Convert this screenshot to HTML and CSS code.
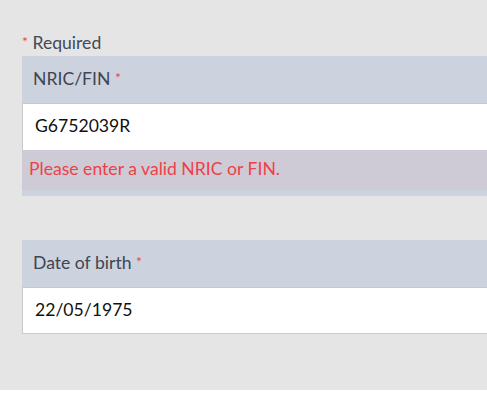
FILE: index.html
```html
<!DOCTYPE html>
<html>
<head>
<meta charset="utf-8">
<link rel="stylesheet" href="styles.css">
</head>
<body>
<div class="page">
  <div class="required"><span class="star">*</span> Required</div>
  <div class="field">
    <div class="label">NRIC/FIN <span class="star">*</span></div>
    <div class="input">G6752039R</div>
    <div class="error">Please enter a valid NRIC or FIN.</div>
    <div class="strip"></div>
  </div>
  <div class="field second">
    <div class="label">Date of birth <span class="star">*</span></div>
    <div class="input last">22/05/1975</div>
  </div>
</div>
</body>
</html>
```
FILE: styles.css
```css
html, body {
  margin: 0;
  padding: 0;
  background: #ffffff;
  overflow: hidden;
}
.page {
  background: #e5e5e5;
  height: 360px;
  padding: 30px 0 0 22px;
  font-family: Lato, "Open Sans", sans-serif;
  font-size: 17.6px;
}
.required {
  color: #444a55;
  line-height: 24px;
  height: 26px;
}
.star {
  color: #f0434b;
  font-size: 14px;
  vertical-align: 2px;
}
.second {
  margin-top: 44px;
}
.label {
  background: #ccd3de;
  color: #404550;
  height: 47px;
  line-height: 44px;
  padding-left: 11px;
  border-bottom: 1px solid #c6c9ce;
}
.input {
  background: #ffffff;
  border-left: 1px solid #c9c9c9;
  color: #111111;
  height: 46px;
  line-height: 44px;
  padding-left: 12px;
}
.input.last {
  height: 45px;
  border-bottom: 1px solid #c9c9c9;
}
.error {
  background: #cfcbd6;
  color: #ee4048;
  height: 40px;
  line-height: 38px;
  padding-left: 7px;
}
.strip {
  background: #ccd3de;
  height: 6px;
}
```
